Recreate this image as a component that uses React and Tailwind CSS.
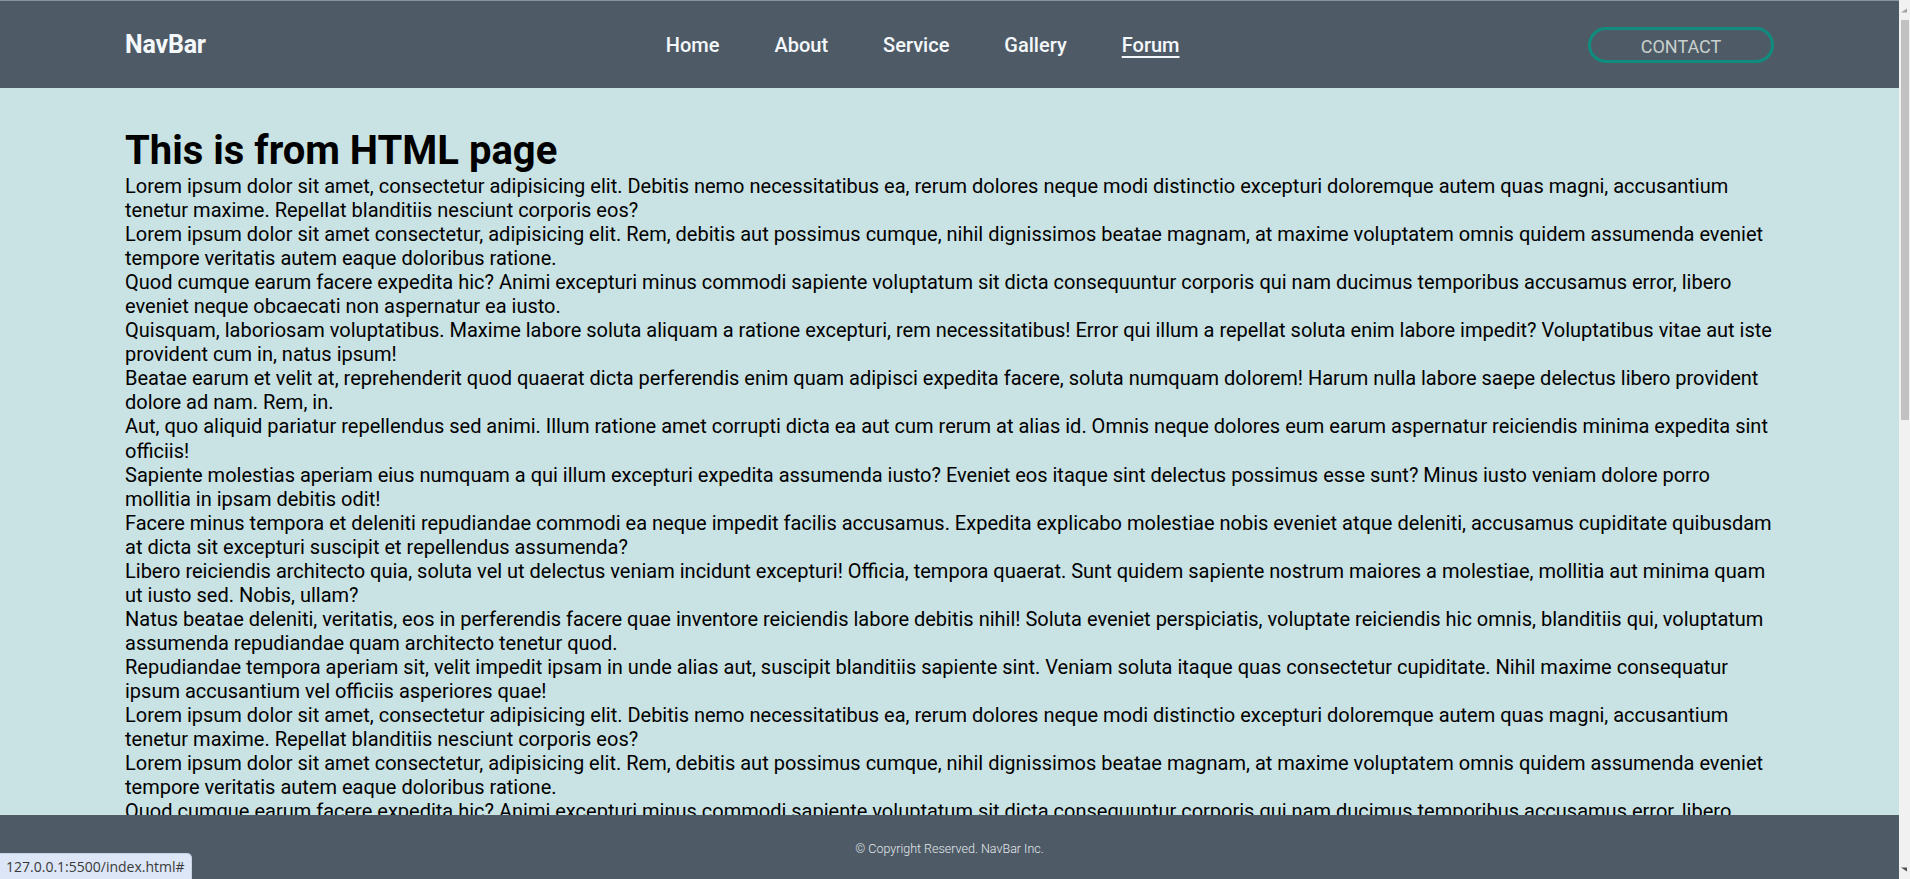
import React from 'react';

const paragraphs = [
  'Lorem ipsum dolor sit amet, consectetur adipisicing elit. Debitis nemo necessitatibus ea, rerum dolores neque modi distinctio excepturi doloremque autem quas magni, accusantium tenetur maxime. Repellat blanditiis nesciunt corporis eos?',
  'Lorem ipsum dolor sit amet consectetur, adipisicing elit. Rem, debitis aut possimus cumque, nihil dignissimos beatae magnam, at maxime voluptatem omnis quidem assumenda eveniet tempore veritatis autem eaque doloribus ratione.',
  'Quod cumque earum facere expedita hic? Animi excepturi minus commodi sapiente voluptatum sit dicta consequuntur corporis qui nam ducimus temporibus accusamus error, libero eveniet neque obcaecati non aspernatur ea iusto.',
  'Quisquam, laboriosam voluptatibus. Maxime labore soluta aliquam a ratione excepturi, rem necessitatibus! Error qui illum a repellat soluta enim labore impedit? Voluptatibus vitae aut iste provident cum in, natus ipsum!',
  'Beatae earum et velit at, reprehenderit quod quaerat dicta perferendis enim quam adipisci expedita facere, soluta numquam dolorem! Harum nulla labore saepe delectus libero provident dolore ad nam. Rem, in.',
  'Aut, quo aliquid pariatur repellendus sed animi. Illum ratione amet corrupti dicta ea aut cum rerum at alias id. Omnis neque dolores eum earum aspernatur reiciendis minima expedita sint officiis!',
  'Sapiente molestias aperiam eius numquam a qui illum excepturi expedita assumenda iusto? Eveniet eos itaque sint delectus possimus esse sunt? Minus iusto veniam dolore porro mollitia in ipsam debitis odit!',
  'Facere minus tempora et deleniti repudiandae commodi ea neque impedit facilis accusamus. Expedita explicabo molestiae nobis eveniet atque deleniti, accusamus cupiditate quibusdam at dicta sit excepturi suscipit et repellendus assumenda?',
  'Libero reiciendis architecto quia, soluta vel ut delectus veniam incidunt excepturi! Officia, tempora quaerat. Sunt quidem sapiente nostrum maiores a molestiae, mollitia aut minima quam ut iusto sed. Nobis, ullam?',
  'Natus beatae deleniti, veritatis, eos in perferendis facere quae inventore reiciendis labore debitis nihil! Soluta eveniet perspiciatis, voluptate reiciendis hic omnis, blanditiis qui, voluptatum assumenda repudiandae quam architecto tenetur quod.',
  'Repudiandae tempora aperiam sit, velit impedit ipsam in unde alias aut, suscipit blanditiis sapiente sint. Veniam soluta itaque quas consectetur cupiditate. Nihil maxime consequatur ipsum accusantium vel officiis asperiores quae!',
];

const links = ['Home', 'About', 'Service', 'Gallery', 'Forum'];

function Navbar() {
  return (
    <header className="h-[88px] shrink-0 bg-[#4e5b67] border-t border-[#8a949c] px-[125px] flex items-center">
      <a href="#" className="text-[25px] font-bold text-[#f4f8fb] tracking-[-0.2px]">NavBar</a>
      <nav className="ml-[460px] flex items-center gap-[55px]">
        {links.map((l) => (
          <a
            key={l}
            href="#"
            className={
              l === 'Forum'
                ? 'text-[20px] font-medium text-[#f4f8fb] leading-[24px] underline decoration-2 underline-offset-[4px]'
                : 'text-[20px] font-medium text-[#f4f8fb] leading-[24px]'
            }
          >
            {l}
          </a>
        ))}
      </nav>
      <button className="ml-auto w-[186px] h-[36px] pt-[3px] rounded-full border-[3px] border-[#0f8c7e] text-[18px] text-[#c8d1cd] flex items-center justify-center">
        CONTACT
      </button>
    </header>
  );
}

function Scrollbar() {
  return (
    <div className="w-[11px] shrink-0 bg-[#f1f1f1] flex flex-col items-center">
      <div className="h-[20px] flex items-center justify-center">
        <svg width="7" height="5" viewBox="0 0 7 5"><path d="M0 4.5 L6 4.5 L6 0.5 Z" fill="#a3a3a3" /></svg>
      </div>
      <div className="w-[8px] h-[400px] ml-[1px] bg-[#c1c1c1]" />
      <div className="flex-1" />
      <div className="h-[20px] flex items-center justify-center">
        <svg width="7" height="5" viewBox="0 0 7 5"><path d="M0 0.5 L6 0.5 L6 4.5 Z" fill="#505050" /></svg>
      </div>
    </div>
  );
}

export default function App() {
  const all = [...paragraphs, ...paragraphs];
  return (
    <div className="relative w-[1910px] h-[879px] flex overflow-hidden font-['Roboto',sans-serif]">
      <div className="flex-1 flex flex-col min-w-0">
        <Navbar />
        <main className="flex-1 overflow-hidden bg-[#c9e2e3] px-[125px] pt-[39px] text-black">
          <h1 className="text-[40px] font-bold leading-[47px]">This is from HTML page</h1>
          {all.map((p, i) => (
            <p key={i} className="text-[20px] leading-[24.05px]">{p}</p>
          ))}
        </main>
        <footer className="h-[64px] shrink-0 bg-[#4e5b67] flex items-center justify-center">
          <p className="text-[12.5px] font-light text-[#e3e7ea] translate-y-[2px]">© Copyright Reserved. NavBar Inc.</p>
        </footer>
      </div>
      <Scrollbar />
      <div className="absolute left-0 bottom-0 h-[26px] px-[6px] flex items-center bg-[#dce6f6] border-t border-r border-[#c7d2e3] rounded-tr-[5px] text-[14px] text-[#3a3a3a] font-['Open_Sans',sans-serif]">
        127.0.0.1:5500/index.html#
      </div>
    </div>
  );
}
